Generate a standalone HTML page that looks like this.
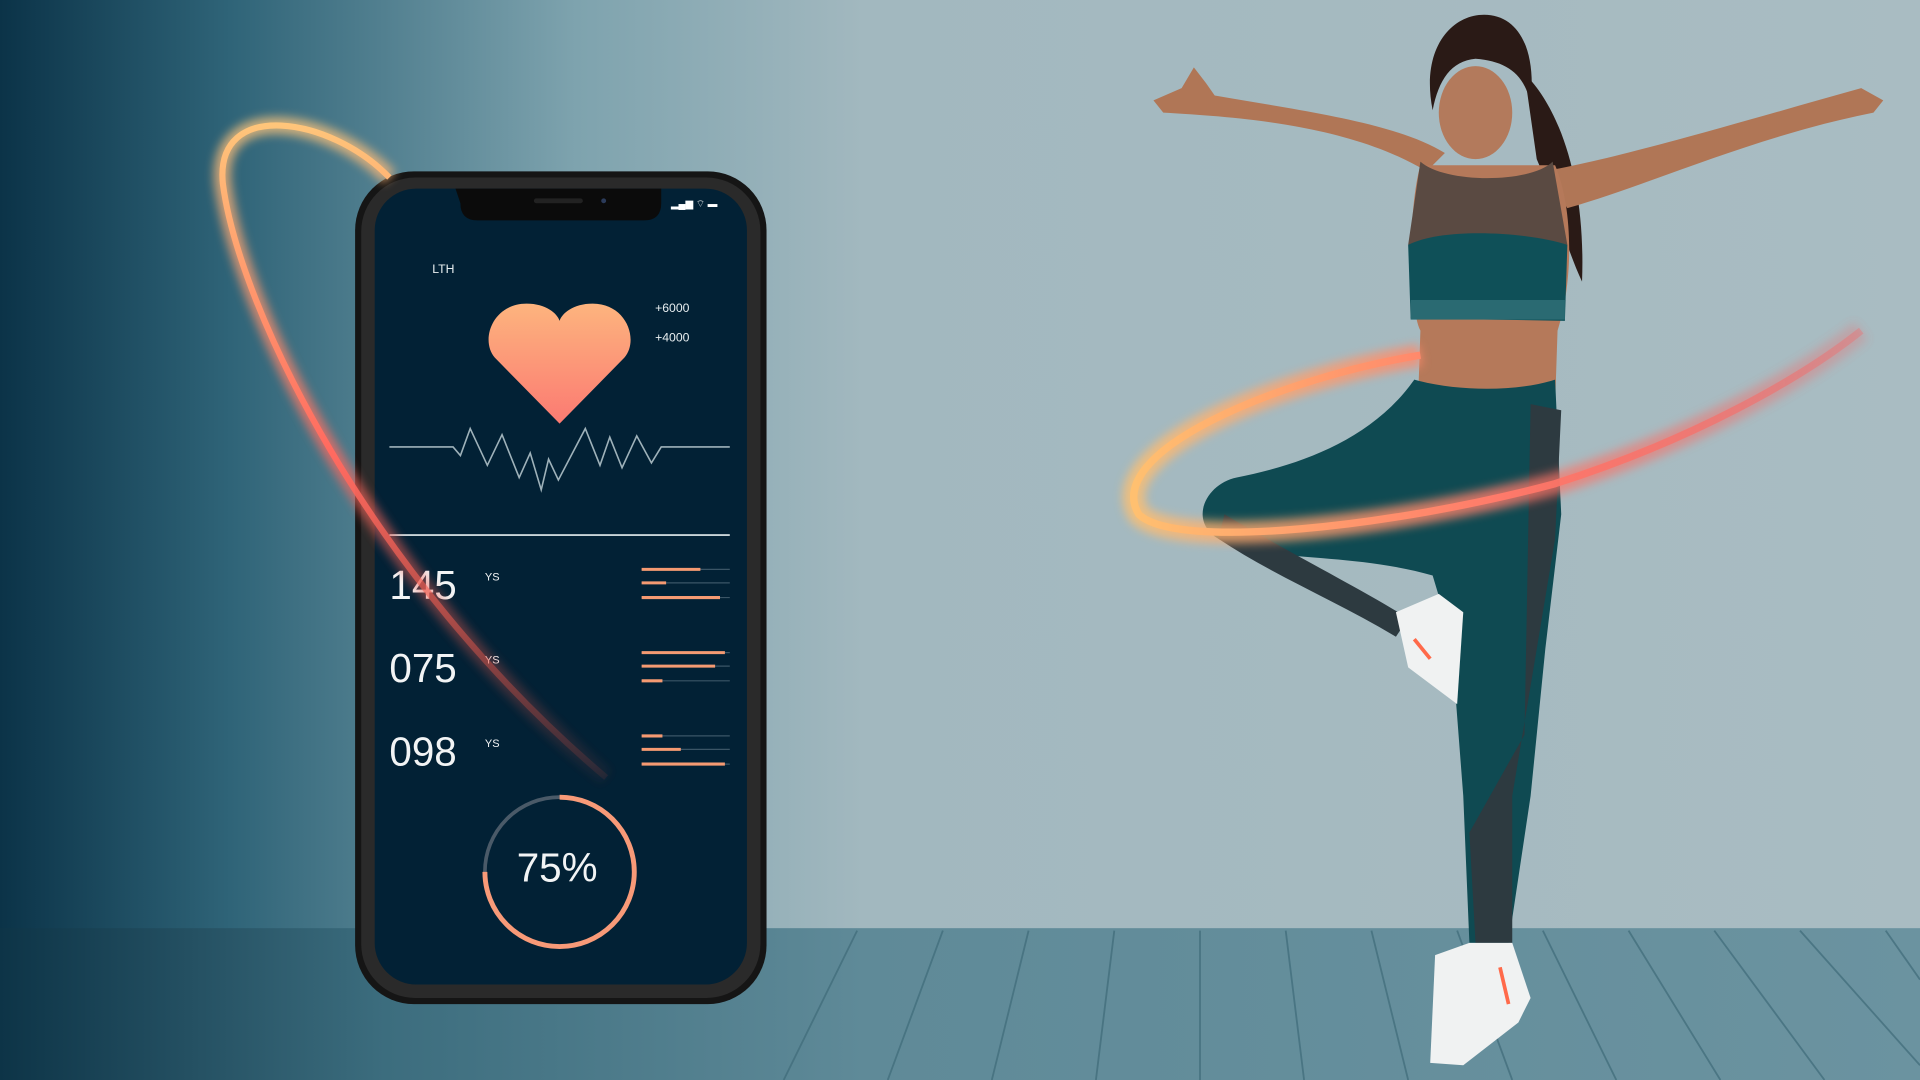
<!DOCTYPE html>
<html><head><meta charset="utf-8"><style>
html,body{margin:0;padding:0;width:1920px;height:1080px;overflow:hidden;background:#9fb4bb}
svg{display:block}
text{font-family:"Liberation Sans",sans-serif}
</style></head><body>
<svg width="1920" height="1080" viewBox="0 0 1568 882" preserveAspectRatio="none" xmlns="http://www.w3.org/2000/svg">
<defs>
<linearGradient id="wall" x1="0" x2="1" y1="0" y2="0">
<stop offset="0" stop-color="#0b3348"/><stop offset="0.12" stop-color="#2f6478"/><stop offset="0.3" stop-color="#7ea3ae"/><stop offset="0.45" stop-color="#a2b8bf"/><stop offset="1" stop-color="#a9bcc2"/>
</linearGradient>
<linearGradient id="floor" x1="0" x2="1" y1="0" y2="0">
<stop offset="0" stop-color="#0d3447"/><stop offset="0.2" stop-color="#3c6d7e"/><stop offset="0.45" stop-color="#5f8a98"/><stop offset="1" stop-color="#6b93a0"/>
</linearGradient>
<linearGradient id="heart" x1="0" x2="0" y1="0" y2="1">
<stop offset="0" stop-color="#fdb47e"/><stop offset="1" stop-color="#fb7a72"/>
</linearGradient>
<linearGradient id="ring1" x1="0" x2="1" y1="0" y2="0">
<stop offset="0" stop-color="#ffc070"/><stop offset="0.5" stop-color="#ff7a6a"/><stop offset="1" stop-color="#ff5a5a" stop-opacity="0.3"/>
</linearGradient>
<linearGradient id="ring2" x1="0" x2="0" y1="0" y2="1">
<stop offset="0" stop-color="#ffc57a"/><stop offset="0.5" stop-color="#ff6a60"/><stop offset="1" stop-color="#e05040" stop-opacity="0.1"/>
</linearGradient>
<filter id="glow"><feGaussianBlur stdDeviation="4"/></filter>
</defs>
<rect width="1568" height="760" fill="url(#wall)"/>
<rect y="758" width="1568" height="124" fill="url(#floor)"/>
<g stroke="#3f6b79" stroke-width="1.5" opacity="0.7">
<path d="M700 760 L640 882M770 760 L725 882M840 760 L810 882M910 760 L895 882M980 760 L980 882M1050 760 L1065 882M1120 760 L1150 882M1190 760 L1235 882M1260 760 L1320 882M1330 760 L1405 882M1400 760 L1490 882M1470 760 L1568 870M1540 760 L1568 800"/>
</g>
<!-- phone -->
<rect x="290" y="140" width="336" height="680" rx="48" fill="#151515"/>
<rect x="295" y="145" width="326" height="670" rx="44" fill="#2a2a2a"/>
<rect x="306" y="154" width="304" height="650" rx="34" fill="#022135"/>
<path d="M372 154 H540 V166 Q540 180 526 180 H390 Q376 180 376 166 Z" fill="#0b0b0b"/>
<rect x="436" y="162" width="40" height="4" rx="2" fill="#222"/>
<circle cx="493" cy="164" r="2" fill="#2b3b5a"/>
<text x="548" y="169" font-size="8" fill="#fff">▂▄▆ ⌔ ▬</text>
<text x="353" y="223" font-size="10" fill="#e8eef0">LTH</text>
<text x="535" y="255" font-size="10" fill="#e8eef0">+6000</text>
<text x="535" y="279" font-size="10" fill="#e8eef0">+4000</text>
<path d="M457 346 L404 292 C392 278 402 248 430 248 C446 248 455 256 457 262 C459 256 468 248 484 248 C512 248 522 278 510 292 Z" fill="url(#heart)"/>
<polyline points="318,365 370,365 376,372 384,350 398,380 410,355 424,390 433,370 442,400 448,375 456,392 478,350 490,380 498,357 508,382 520,356 532,378 540,365 596,365" fill="none" stroke="#9fb2ba" stroke-width="1.3"/>
<line x1="318" y1="437" x2="596" y2="437" stroke="#c9d4d8" stroke-width="1.5"/>
<g fill="#f2f4f5"><text x="318" y="489" font-size="33">145</text><text x="318" y="557" font-size="33">075</text><text x="318" y="625" font-size="33">098</text>
<text x="396" y="474" font-size="9">YS</text><text x="396" y="542" font-size="9">YS</text><text x="396" y="610" font-size="9">YS</text></g>
<g stroke="#3b5566" stroke-width="1"><path d="M524 465H596M524 476H596M524 488H596M524 533H596M524 544H596M524 556H596M524 601H596M524 612H596M524 624H596"/></g>
<g stroke="#f59a72" stroke-width="2.5"><path d="M524 465H572M524 476H544M524 488H588M524 533H592M524 544H584M524 556H541M524 601H541M524 612H556M524 624H592"/></g>
<circle cx="457" cy="712" r="61" fill="none" stroke="#4a5a68" stroke-width="3"/>
<path d="M457 651 A61 61 0 1 1 396 712" fill="none" stroke="#f89a78" stroke-width="4"/>
<text x="455" y="720" font-size="33" fill="#f2f4f5" text-anchor="middle">75%</text>
<!-- phone ring (top part behind phone frame edge, lower over screen) -->
<path d="M318 145 C270 95 175 80 182 150 C195 250 300 470 495 635" fill="none" stroke="url(#ring2)" stroke-width="14" filter="url(#glow)" opacity="0.75"/>
<path d="M318 145 C270 95 175 80 182 150 C195 250 300 470 495 635" fill="none" stroke="url(#ring2)" stroke-width="5"/>
<!-- woman -->
<g>
<path d="M1245 60 C1275 90 1295 150 1292 230 C1278 200 1268 160 1255 130 Z" fill="#2a1a16"/>
<path d="M1165 140 C1100 100 1000 95 950 92 L942 82 L965 72 L975 55 L985 68 L992 78 C1060 90 1140 100 1180 125 Z" fill="#b07656"/>
<path d="M1260 140 C1320 130 1420 100 1520 72 L1538 82 L1530 92 C1430 112 1350 150 1280 170 Z" fill="#b07656"/>
<ellipse cx="1205" cy="92" rx="30" ry="38" fill="#b37a5c"/>
<path d="M1170 90 C1160 40 1185 12 1212 12 C1240 12 1255 40 1250 85 C1245 60 1230 50 1205 48 C1185 50 1175 65 1170 90 Z" fill="#2a1a16"/>
<path d="M1160 135 C1150 170 1150 250 1160 270 L1158 330 L1270 330 L1272 270 C1285 230 1285 170 1270 135 Z" fill="#b5795a"/>
<path d="M1160 132 C1180 150 1250 150 1268 132 L1280 200 L1150 200 Z" fill="#5a4a42"/>
<path d="M1150 200 C1180 185 1250 190 1280 200 L1278 262 L1152 260 Z" fill="#0f5058"/>
<rect x="1152" y="245" width="126" height="16" fill="#2a6a72"/>
<path d="M1155 310 C1190 320 1240 320 1270 310 L1275 420 L1262 530 L1250 650 L1232 770 L1200 770 L1195 650 L1185 520 L1170 470 C1100 450 1030 460 995 440 C970 425 985 395 1010 390 C1060 380 1120 360 1155 310 Z" fill="#0f4a52"/>
<path d="M1250 330 L1275 335 L1270 440 L1250 560 L1235 650 L1235 770 L1205 770 L1200 680 L1245 600 Z" fill="#2d3a40"/>
<path d="M995 440 C1040 470 1090 490 1140 520 L1150 505 C1110 480 1050 450 1000 420 Z" fill="#2d3a40"/>
<path d="M1140 500 L1175 485 L1195 500 L1190 575 L1150 545 Z" fill="#f0f2f2"/>
<path d="M1172 780 L1200 770 L1235 770 L1250 815 L1240 835 L1195 870 L1168 868 Z" fill="#f0f2f2"/>
<path d="M1225 790 L1232 820" stroke="#ff6a4a" stroke-width="3"/>
<path d="M1155 522 L1168 538" stroke="#ff6a4a" stroke-width="3"/>
</g>
<!-- waist ring -->
<path d="M1160 290 C1040 310 900 370 930 420 C960 450 1140 430 1270 395 C1380 360 1470 310 1520 270" fill="none" stroke="url(#ring1)" stroke-width="18" filter="url(#glow)" opacity="0.8"/>
<path d="M1160 290 C1040 310 900 370 930 420 C960 450 1140 430 1270 395 C1380 360 1470 310 1520 270" fill="none" stroke="url(#ring1)" stroke-width="6"/>
</svg>
</body></html>
